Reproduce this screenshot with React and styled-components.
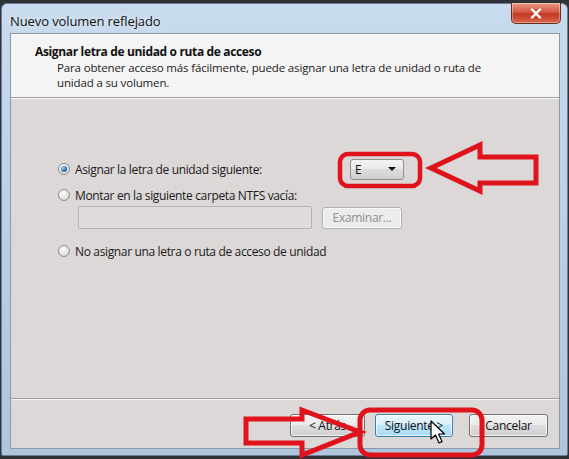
import React from "react";
import styled, { createGlobalStyle } from "styled-components";

const Global = createGlobalStyle`
  html, body { margin: 0; padding: 0; }
  body {
    background: #2f3338;
    width: 569px;
    height: 459px;
    overflow: hidden;
    font-family: "Open Sans", "Noto Sans", "DejaVu Sans", sans-serif;
  }
`;

const Stage = styled.div`
  position: relative;
  width: 569px;
  height: 459px;
  padding: 3px 0 0 1px;
  box-sizing: border-box;
`;

const Window = styled.div`
  width: 567px;
  height: 453px;
  box-sizing: border-box;
  border: 1px solid #6c7f96;
  border-radius: 6px 6px 2px 2px;
  background: linear-gradient(180deg, #c9dbee 0%, #bdd1e7 40%, #afc5de 100%);
  display: flex;
  flex-direction: column;
  padding: 0 7px 6px 8px;
`;

const TitleBar = styled.div`
  height: 29px;
  display: flex;
  align-items: flex-start;
  justify-content: space-between;
`;

const Title = styled.div`
  font-size: 13px;
  color: #111;
  padding-top: 8px;
  letter-spacing: -0.1px;
  text-shadow: 0 0 6px rgba(255,255,255,0.9);
`;

const CloseBtn = styled.div`
  width: 48px;
  height: 20px;
  margin-top: -1px;
  margin-right: -1px;
  border: 1px solid #6b2a22;
  border-top: none;
  border-radius: 0 0 5px 5px;
  background: linear-gradient(180deg, #e99a88 0%, #d4573f 45%, #c23a22 55%, #d9674a 100%);
  display: flex;
  align-items: center;
  justify-content: center;
  box-shadow: inset 0 0 0 1px rgba(255,255,255,0.35);
`;

const Content = styled.div`
  flex: 1;
  display: flex;
  flex-direction: column;
  border: 1px solid #8a98a8;
  background: #dcd8d7;
`;

const Header = styled.div`
  height: 64px;
  box-sizing: border-box;
  background: #f4f4f4;
  border-bottom: 1px solid #a09c9c;
  box-shadow: 0 1px 0 #fafafa;
  padding: 10px 0 0 24px;
`;

const HeaderTitle = styled.div`
  font-weight: 700;
  font-size: 12px;
  color: #111;
  letter-spacing: -0.35px;
  line-height: 16px;
`;

const HeaderSub = styled.div`
  font-size: 11.5px;
  color: #222;
  line-height: 15px;
  padding-left: 22px;
  width: 450px;
  letter-spacing: -0.15px;
`;

const Body = styled.div`
  flex: 1;
  padding: 60px 0 0 47px;
  display: flex;
  flex-direction: column;
  border-bottom: 1px solid #a09c9c;
  box-shadow: 0 1px 0 #f4f2f2;
`;

const Row = styled.div`
  display: flex;
  align-items: center;
  height: ${p => p.$h || 18}px;
  margin-top: ${p => p.$mt || 0}px;
  padding-left: ${p => p.$indent || 0}px;
`;

const RadioLabel = styled.label`
  display: flex;
  align-items: center;
  gap: 5px;
  font-size: 12px;
  color: #1a1a1a;
  letter-spacing: -0.35px;
  width: ${p => p.$w ? p.$w + "px" : "auto"};
`;

const RadioCircle = styled.span`
  width: 12px;
  height: 12px;
  border-radius: 50%;
  box-sizing: border-box;
  border: 1px solid #8b8d8f;
  background: radial-gradient(circle at 40% 35%, #ffffff 0%, #e6e6e6 50%, #c9c9c9 100%);
  display: flex;
  align-items: center;
  justify-content: center;
  &::after {
    content: "";
    width: 6px;
    height: 6px;
    border-radius: 50%;
    display: ${p => (p.$checked ? "block" : "none")};
    background: radial-gradient(circle at 35% 35%, #a9d3f0 0%, #2f6fa6 55%, #163e66 100%);
  }
`;

const Combo = styled.div`
  width: 54px;
  height: 21px;
  box-sizing: border-box;
  border: 1px solid #8e8f8f;
  border-radius: 3px;
  background: linear-gradient(180deg, #f2f2f2 0%, #ebebeb 45%, #dcdcdc 50%, #cfcfcf 100%);
  display: flex;
  align-items: center;
  justify-content: space-between;
  padding: 0 7px 0 4px;
  font-size: 12px;
  color: #111;
`;

const Caret = styled.span`
  width: 0;
  height: 0;
  border-left: 4px solid transparent;
  border-right: 4px solid transparent;
  border-top: 4px solid #111;
`;

const TextBox = styled.div`
  width: 234px;
  height: 23px;
  box-sizing: border-box;
  border: 1px solid #b4b4b4;
  border-radius: 2px;
  background: #e0dcdb;
`;

const Button = styled.div`
  width: ${p => p.$w || 75}px;
  height: ${p => p.$h || 23}px;
  box-sizing: border-box;
  border: 1px solid ${p => (p.$primary ? "#3c7fb1" : p.$disabled ? "#adb2b5" : "#707070")};
  border-radius: 3px;
  background: ${p =>
    p.$primary
      ? "linear-gradient(180deg, #eaf6fd 0%, #d9f0fc 45%, #bee6fd 50%, #a7d9f5 100%)"
      : p.$disabled
      ? "#eeeceb"
      : "linear-gradient(180deg, #f2f2f2 0%, #ebebeb 45%, #dddddd 50%, #cfcfcf 100%)"};
  box-shadow: inset 0 0 0 1px rgba(255,255,255,0.7);
  display: flex;
  align-items: center;
  justify-content: center;
  font-size: 12px;
  letter-spacing: -0.3px;
  color: ${p => (p.$disabled ? "#8d8d8d" : "#111")};
  margin-left: ${p => p.$ml || 0}px;
`;

const Footer = styled.div`
  height: 49px;
  display: flex;
  align-items: flex-start;
  justify-content: flex-end;
  padding: 15px 11px 0 0;
  box-sizing: border-box;
`;

const Overlay = styled.svg`
  position: absolute;
  left: 0;
  top: 0;
  pointer-events: none;
`;

const Cursor = styled.svg`
  position: absolute;
  left: 430px;
  top: 420px;
`;

function Radio({ checked, children, w }) {
  return (
    <RadioLabel $w={w}>
      <RadioCircle $checked={checked} />
      <span>{children}</span>
    </RadioLabel>
  );
}

export default function App() {
  return (
    <>
      <Global />
      <Stage>
        <Window>
          <TitleBar>
            <Title>Nuevo volumen reflejado</Title>
            <CloseBtn>
              <svg width="12" height="11" viewBox="0 0 12 11">
                <path d="M2 1.5 L10 9.5 M10 1.5 L2 9.5" stroke="#fff" strokeWidth="2.4" strokeLinecap="round" />
              </svg>
            </CloseBtn>
          </TitleBar>
          <Content>
            <Header>
              <HeaderTitle>Asignar letra de unidad o ruta de acceso</HeaderTitle>
              <HeaderSub>
                Para obtener acceso más fácilmente, puede asignar una letra de unidad o ruta de unidad a su volumen.
              </HeaderSub>
            </Header>
            <Body>
              <Row $h={22}>
                <Radio checked w={292}>Asignar la letra de unidad siguiente:</Radio>
                <Combo>
                  <span>E</span>
                  <Caret />
                </Combo>
              </Row>
              <Row $mt={6}>
                <Radio>Montar en la siguiente carpeta NTFS vacía:</Radio>
              </Row>
              <Row $h={23} $mt={2} $indent={20}>
                <TextBox />
                <Button $disabled $w={80} $h={22} $ml={10}>Examinar...</Button>
              </Row>
              <Row $mt={13}>
                <Radio>No asignar una letra o ruta de acceso de unidad</Radio>
              </Row>
            </Body>
            <Footer>
              <Button>&lt; Atrás</Button>
              <Button $primary $ml={10} $w={78}>Siguiente &gt;</Button>
              <Button $ml={16} $w={79}>Cancelar</Button>
            </Footer>
          </Content>
        </Window>

        <Cursor width="18" height="26" viewBox="0 0 18 26">
          <path d="M1 1 L1 19 L5.5 15 L9 23 L12 21.6 L8.6 14 L14.5 14 Z" fill="#fff" stroke="#000" strokeWidth="1.2" strokeLinejoin="round" />
        </Cursor>

        <Overlay width="569" height="459" viewBox="0 0 569 459">
          <rect x="340" y="154" width="80" height="32" rx="8" fill="none" stroke="#e0121b" strokeWidth="4.5" />
          <path d="M431 168 L480 145 L480 157 L536 157 L536 183 L480 183 L480 191 Z" fill="none" stroke="#e0121b" strokeWidth="5" strokeLinejoin="miter" />
          <rect x="360" y="410" width="122" height="45" rx="10" fill="none" stroke="#e0121b" strokeWidth="5" />
          <path d="M360 432 L302 410 L302 419 L246 419 L246 443 L302 443 L302 455 Z" fill="none" stroke="#e0121b" strokeWidth="5" strokeLinejoin="miter" />
        </Overlay>
      </Stage>
    </>
  );
}
